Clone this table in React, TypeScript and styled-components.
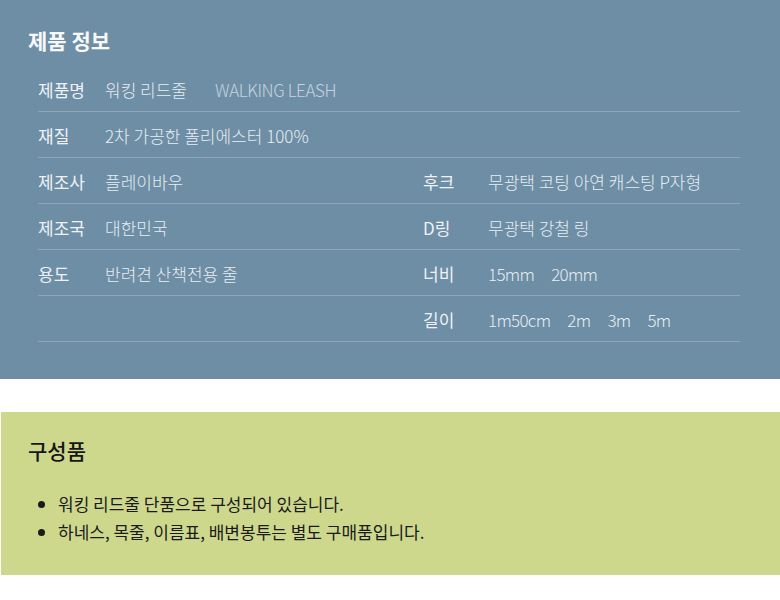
import styled, { createGlobalStyle } from "styled-components";

const GlobalStyle = createGlobalStyle`
  body {
    margin: 0;
    background: #ffffff;
    font-family: "Noto Sans CJK KR", "Noto Sans", sans-serif;
  }
`;

type Spec = {
  label?: string;
  values?: string[];
  sub?: string;
  wide?: boolean;
  narrow?: boolean;
};

const rows: Spec[][] = [
  [{ label: "제품명", values: ["워킹 리드줄"], sub: "WALKING LEASH", wide: true }],
  [{ label: "재질", values: ["2차 가공한 폴리에스터 100%"], wide: true }],
  [
    { label: "제조사", values: ["플레이바우"] },
    { label: "후크", values: ["무광택 코팅 아연 캐스팅 P자형"] },
  ],
  [
    { label: "제조국", values: ["대한민국"] },
    { label: "D링", values: ["무광택 강철 링"] },
  ],
  [
    { label: "용도", values: ["반려견 산책전용 줄"] },
    { label: "너비", values: ["15mm", "20mm"], narrow: true },
  ],
  [{}, { label: "길이", values: ["1m50cm", "2m", "3m", "5m"], narrow: true }],
];

const App = () => {
  return (
    <>
      <GlobalStyle />
      <InfoPanel>
        <PanelTitle>제품 정보</PanelTitle>
        <SpecTable>
          {rows.map((row, i) => (
            <SpecRow key={i}>
              {row.map((cell, j) => (
                <Cell key={j} $wide={cell.wide}>
                  <Label $width={j === 0 ? 67 : 65}>{cell.label}</Label>
                  <Value>
                    {cell.values?.map((v) => (
                      <ValueItem key={v} $narrow={cell.narrow}>
                        {v}
                      </ValueItem>
                    ))}
                    {cell.sub && <SubValue>{cell.sub}</SubValue>}
                  </Value>
                </Cell>
              ))}
            </SpecRow>
          ))}
        </SpecTable>
      </InfoPanel>

      <PartsPanel>
        <PartsTitle>구성품</PartsTitle>
        <PartsList>
          <li>워킹 리드줄 단품으로 구성되어 있습니다.</li>
          <li>하네스, 목줄, 이름표, 배변봉투는 별도 구매품입니다.</li>
        </PartsList>
      </PartsPanel>
    </>
  );
};

export default App;

const InfoPanel = styled.section`
  background: #6e8ea5;
  height: 379px;
  box-sizing: border-box;
  padding: 24px 40px 0 28px;
`;

const PanelTitle = styled.h2`
  margin: 0;
  font-size: 21px;
  line-height: 32px;
  font-weight: 700;
  color: #f6f8fa;
`;

const SpecTable = styled.div`
  margin: 10px 0 0 10px;
  display: flex;
  flex-direction: column;
`;

const SpecRow = styled.div`
  display: grid;
  grid-template-columns: 385px 1fr;
  height: 46px;
  box-sizing: border-box;
  border-bottom: 1px solid #8ca7bb;
`;

const Cell = styled.div<{ $wide?: boolean }>`
  display: flex;
  align-items: center;
  padding-top: 2px;
  grid-column: ${(p) => (p.$wide ? "1 / -1" : "auto")};
`;

const Label = styled.span<{ $width: number }>`
  width: ${(p) => p.$width}px;
  flex-shrink: 0;
  font-size: 17px;
  font-weight: 400;
  color: #eef2f6;
`;

const Value = styled.span`
  display: flex;
  gap: 17px;
  font-size: 17px;
  font-weight: 300;
  color: #e6edf2;
`;

const ValueItem = styled.span<{ $narrow?: boolean }>`
  white-space: nowrap;
  letter-spacing: ${(p) => (p.$narrow ? "-0.7px" : "0")};
`;

const SubValue = styled.span`
  margin-left: 11px;
  color: #c4d3df;
  letter-spacing: -0.4px;
`;

const PartsPanel = styled.section`
  margin: 33px 0 0 1px;
  height: 163px;
  box-sizing: border-box;
  background: #cdd88d;
  padding: 22px 28px 0 27px;
`;

const PartsTitle = styled.h2`
  margin: 0;
  font-size: 21px;
  line-height: 32px;
  font-weight: 500;
  color: #161616;
`;

const PartsList = styled.ul`
  margin: 24px 0 0;
  padding-left: 30px;
  font-size: 17px;
  line-height: 28px;
  font-weight: 400;
  color: #1a1a1a;
`;
